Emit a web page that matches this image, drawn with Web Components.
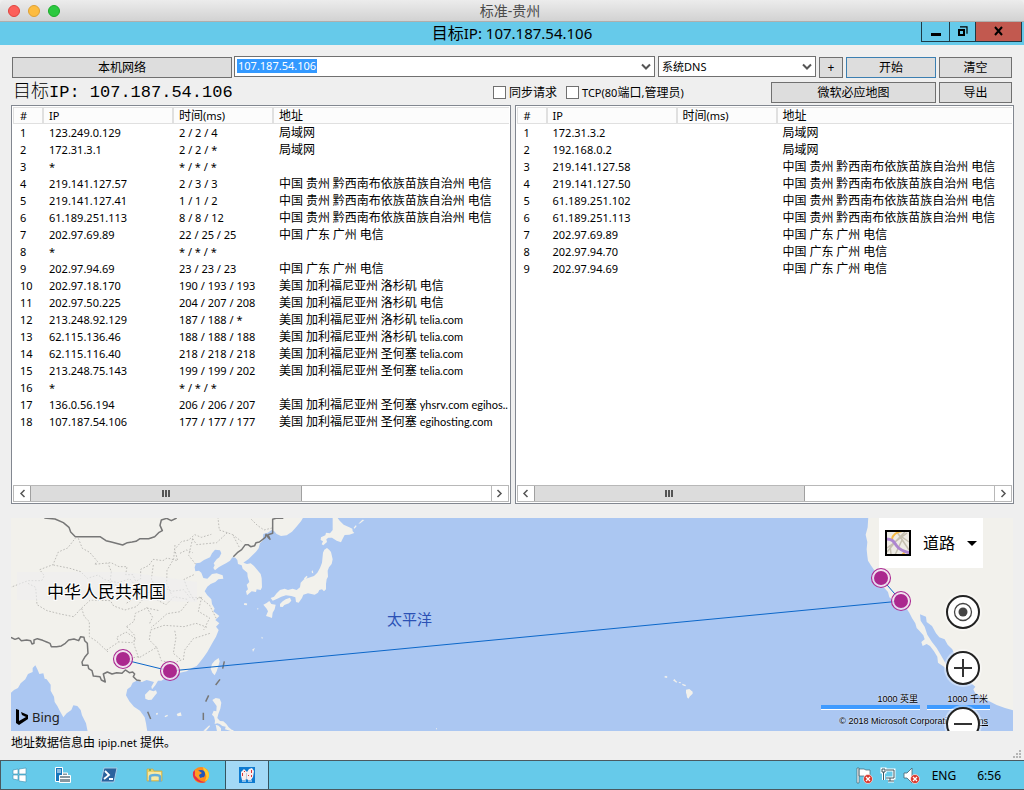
<!DOCTYPE html>
<html lang="zh-CN">
<head>
<meta charset="utf-8">
<title>标准-贵州</title>
<style>
  html, body { height: 100%; margin: 0; }
  body { background: #efefef; color: #000; font: 11px/17px "Noto Sans", "Noto Sans CJK SC", sans-serif; }
</style>
</head>
<body>
<remote-desktop></remote-desktop>
<script>
// Chinese runs are set one pixel larger than the Latin text round them.
const mix = (text) => text.replace(/[\u3000-\u9fff]+/g, '<span class="cj">$&</span>').replace(/[a-z]+\.com.*/, '<span class="host">$&</span>');
const BASE = `
  *, *::before { box-sizing: border-box; }
  .cj { font-size: var(--cj, 12px); }
  button, input, select { font: inherit; color: inherit; margin: 0; padding: 0; border: 0; border-radius: 0; }
`;
function define(name, render) {
  customElements.define(name, class extends HTMLElement {
    constructor() { super(); this.attachShadow({ mode: 'open' }); }
    connectedCallback() {
      const t = document.createElement('template');
      t.innerHTML = '<style>' + BASE + '</style>' + render(this);
      this.shadowRoot.replaceChildren(t.content.cloneNode(true));
    }
  });
}

define('mac-titlebar', () => `
<style>
  :host { display: grid; grid-template-columns: 1fr auto 1fr; align-items: center; height: 22px; flex: none; padding-right: 4px;
    background: linear-gradient(#ececec, #d2d2d2); border-bottom: 1px solid #b0aeac; border-radius: 5px 5px 0 0;
    font-size: 14px; line-height: 21px; color: #4a4a4a; }
  .lights { display: flex; gap: 8px; padding-left: 8px; }
  button { width: 12px; height: 12px; border-radius: 50%; background: var(--c); border: 1px solid var(--b); }
</style>
<div class="lights">
  <button aria-label="关闭" style="--c:#fc605b;--b:#e0443e"></button>
  <button aria-label="最小化" style="--c:#fdbc40;--b:#dea034"></button>
  <button aria-label="缩放" style="--c:#2bc940;--b:#1aab29"></button>
</div>
<span><slot></slot></span>`);

define('win-titlebar', () => `
<style>
  :host { display: grid; grid-template-columns: 1fr auto 1fr; height: 23px; flex: none; background: #66caea;
    font-size: 15px; line-height: 23px; --cj: 16px; }
  .ctl { display: flex; justify-content: flex-end; height: 20px; padding-right: 2px; }
  button { display: grid; place-items: center; background: #66caea; border: 1px solid #1d3a46; border-top: 0; margin-left: -1px; width: 29px; }
  .max { width: 27px; } .close { width: 47px; background: #c2594f; }
</style>
<span></span><span>${mix('目标IP: 107.187.54.106')}</span>
<div class="ctl">
  <button aria-label="最小化"><svg width="11" height="12"><path d="M1 7h10v3H1z"/></svg></button>
  <button class="max" aria-label="还原"><svg width="11" height="12" fill="none" stroke="#000"><path d="M2 4h5v5H2z" stroke-width="2"/><path d="M3 .8h7v7" stroke-width="1.200"/></svg></button>
  <button class="close" aria-label="关闭"><svg width="10" height="11" stroke="#000" stroke-width="2"><path d="M1 1l7 8M8 1L1 9"/></svg></button>
</div>`);

define('push-button', () => `
<style>
  :host { display: block; height: 21px; flex: none; font-size: 12px; }
  button { display: block; width: 100%; height: 100%; background: #ddd; border: 1px solid #707070; line-height: 19px; }
  :host([default]) button { border-color: #3c7fb1; }
</style>
<button><slot></slot></button>`);

const CHEVRON = '<svg width="10" height="8" fill="none" stroke="#555" stroke-width="2"><path d="M1 1.500l4 4 4-4"/></svg>';

define('combo-box', () => `
<style>
  :host { display: flex; height: 21px; background: #fff; border: 1px solid #707070; align-items: center; justify-content: space-between; padding-left: 2px; }
  input { width: 80px; height: 14px; margin-bottom: 1px; padding-left: 1px; background: #39f; color: #fff; line-height: 14px; outline: none; }
  button { background: none; width: 16px; height: 17px; display: grid; place-items: center; }
</style>
<input aria-label="目标地址" value="107.187.54.106"><button aria-label="历史">${CHEVRON}</button>`);

define('dns-select', () => `
<style>
  :host { display: grid; height: 21px; background: #fff; border: 1px solid #707070; }
  select, svg { grid-area: 1 / 1; }
  select { appearance: none; background: none; width: 100%; padding-left: 3px; height: 19px; line-height: 19px; }
  svg { justify-self: end; align-self: center; margin-right: 3px; pointer-events: none; }
</style>
<select aria-label="DNS"><option>系统DNS</option></select>${CHEVRON}`);

define('check-box', (el) => `
<style>
  :host { display: block; }
  label { display: flex; align-items: center; gap: 3px; }
  input { appearance: none; width: 13px; height: 13px; background: #fff; border: 1px solid #707070; }
</style>
<label><input type="checkbox"><span>${mix(el.getAttribute('label'))}</span></label>`);

define('trace-toolbar', () => `
<style>
  :host { display: grid; gap: 4px; padding: 0 2px 0 1px; }
  .row { display: flex; gap: 3px; }
  .one { height: 22px; align-items: flex-end; }
  .one combo-box, .one dns-select { align-self: flex-start; }
  .two { height: 22px; }
  .local { width: 220px; margin-right: -1px; }
  combo-box { flex: 1; } dns-select { width: 158px; }
  .plus { width: 24px; } .start { width: 90px; } .end { width: 73px; } .map { width: 165px; }
  h1 { margin: 0; padding-left: 1px; flex: 1; font: 17px/20px "Liberation Mono", "Noto Sans CJK SC", monospace; --cj: 18px; white-space: pre; }
  .cj { font-weight: 300; }
  .checks { display: flex; gap: 9px; width: 275px; align-items: center; height: 20px; }
</style>
<div class="row one">
  <push-button class="local">本机网络</push-button><combo-box></combo-box><dns-select></dns-select>
  <push-button class="plus">+</push-button><push-button class="start" default>开始</push-button><push-button class="end">清空</push-button>
</div>
<div class="row two">
  <h1>${mix('目标IP: 107.187.54.106')}</h1>
  <div class="checks"><check-box label="同步请求"></check-box><check-box label="TCP(80端口,管理员)"></check-box></div>
  <push-button class="map">微软必应地图</push-button><push-button class="end">导出</push-button>
</div>`);

const QXN = '中国 贵州 黔西南布依族苗族自治州 电信', GZ = '中国 广东 广州 电信';
const LA = '美国 加利福尼亚州 洛杉矶 ', SJ = '美国 加利福尼亚州 圣何塞 ', NONE = ['*', '* / * / *', ''];
const ROUTES = {
  out: [
    ['123.249.0.129', '2 / 2 / 4', '局域网'], ['172.31.3.1', '2 / 2 / *', '局域网'], NONE,
    ['219.141.127.57', '2 / 3 / 3', QXN], ['219.141.127.41', '1 / 1 / 2', QXN], ['61.189.251.113', '8 / 8 / 12', QXN],
    ['202.97.69.89', '22 / 25 / 25', GZ], NONE, ['202.97.94.69', '23 / 23 / 23', GZ],
    ['202.97.18.170', '190 / 193 / 193', LA + '电信'], ['202.97.50.225', '204 / 207 / 208', LA + '电信'],
    ['213.248.92.129', '187 / 188 / *', LA + 'telia.com'], ['62.115.136.46', '188 / 188 / 188', LA + 'telia.com'],
    ['62.115.116.40', '218 / 218 / 218', SJ + 'telia.com'], ['213.248.75.143', '199 / 199 / 202', SJ + 'telia.com'], NONE,
    ['136.0.56.194', '206 / 206 / 207', SJ + 'yhsrv.com egihos..'], ['107.187.54.106', '177 / 177 / 177', SJ + 'egihosting.com']
  ],
  back: [
    ['172.31.3.2', '', '局域网'], ['192.168.0.2', '', '局域网'],
    ['219.141.127.58', '', QXN], ['219.141.127.50', '', QXN], ['61.189.251.102', '', QXN], ['61.189.251.113', '', QXN],
    ['202.97.69.89', '', GZ], ['202.97.94.70', '', GZ], ['202.97.94.69', '', GZ]
  ]
};

define('route-list', (el) => `
<style>
  :host { display: flex; flex-direction: column; background: #fff; border: 1px solid #828790; padding: 1px; min-width: 0; }
  .body { flex: 1; overflow: hidden; }
  table { width: 100%; table-layout: fixed; border-collapse: separate; border-spacing: 0; }
  th, td { height: 17px; padding: 0 0 0 5px; text-align: left; font-weight: 400; white-space: nowrap; overflow: hidden; line-height: 17px; }
  .host { font-family: Lato, sans-serif; line-height: 1; }
  th { line-height: 15px; background: #fcfcfc; border: solid #e0e0e0; border-width: 1px 2px 1px 0; }
  th:first-child { border-left-width: 1px; }
  th:last-child { border-right: 0; }
  td:first-child { padding-left: 7px; } th:first-child { padding-left: 6px; }
  .n { width: 31px; } .ip { width: 130px; } .ms { width: 100px; }
  .bar { display: flex; height: 17px; background: #fff; border: 1px solid #b8b8b8; }
  .bar button { width: 16px; background: #fff; display: grid; place-items: center; }
  .thumb { width: 59%; flex: none; background: #dcdcdc; border: solid #a0a0a0; border-width: 0 1px; display: grid; place-items: center; }
  .track { flex: 1; display: flex; border-right: 1px solid #b8b8b8; }
  .grip { width: 8px; height: 7px; background: repeating-linear-gradient(90deg, #555 0 2px, transparent 2px 3px); }
</style>
<div class="body"><table>
  <colgroup><col class="n"><col class="ip"><col class="ms"><col></colgroup>
  <thead><tr><th>#</th><th>IP</th><th>${mix('时间(ms)')}</th><th>${mix('地址')}</th></tr></thead>
  <tbody>${ROUTES[el.getAttribute('route')].map((r, i) => `<tr><td>${i + 1}</td>${r.map(c => `<td>${mix(c)}</td>`).join('')}</tr>`).join('')}</tbody>
</table></div>
<div class="bar">
  <button aria-label="向左"><svg width="7" height="9" fill="none" stroke="#555" stroke-width="1.500"><path d="M5.500 1L2 4.500 5.500 8"/></svg></button>
  <div class="track"><div class="thumb"><span class="grip"></span></div></div>
  <button aria-label="向右"><svg width="7" height="9" fill="none" stroke="#555" stroke-width="1.500"><path d="M1.500 1L5 4.500 1.500 8"/></svg></button>
</div>`);

const pin = (x, y) => `<g transform="translate(${x} ${y})"><circle r="9.500" fill="#f0e0f0" fill-opacity=".8" stroke="#ab2a92" stroke-width="1.100"/><circle r="7" fill="#ab288e"/></g>`;

define('route-map', () => `
<style>
  :host { display: block; position: relative; height: 213px; flex: none; overflow: hidden; background: #abc7f2; }
  .world { display: block; width: 100%; height: 213px; }
  .world text { font-family: "Noto Sans CJK SC", sans-serif; paint-order: stroke; }
  .type { position: absolute; right: 30px; top: 0; width: 104px; height: 50px; background: #fffffffa; display: flex; align-items: center; padding-left: 6px; font-size: 16px; }
  .type span { margin: 0 12px; }
  .round { position: absolute; right: 33px; width: 34px; height: 34px; border-radius: 50%; background: #fff; border: 2px solid #222; display: grid; place-items: center; box-shadow: 0 0 0 2px #ffffff66; }
  .round svg { display: block; }
  .scale { position: absolute; right: 23px; bottom: 4px; display: grid; justify-items: end; font: 9px/12px "Liberation Sans", "Noto Sans CJK SC", sans-serif; text-shadow: 0 0 2px #fff; }
  .bars { display: flex; gap: 7px; }
  .bars span { border-bottom: 4px solid #3f9bff; text-align: right; padding-right: 2px; box-shadow: 0 1px #fff; }
  .mi { width: 99px; } .km { width: 63px; }
  .copy { margin-top: 7px; padding-right: 2px; white-space: nowrap; line-height: 11px; }
  .copy a { color: inherit; margin-left: 4px; }
  .bing { position: absolute; left: 5px; bottom: 5px; display: flex; align-items: center; gap: 4px; font-size: 13px; line-height: 17px; color: #222; }
</style>
<svg class="world" viewBox="11 518 1002 213" preserveAspectRatio="xMaxYMid slice" role="img" aria-label="路由地图">
  <rect x="11" y="518" width="1002" height="213" fill="#abc7f2"/>
  <g fill="#f2f1ec" transform="translate(0 510) scale(.33333)">
    <path d="M30 20H911L903 34 888 52 876 65 860 76 843 78 830 72 822 63 815 60 803 68 790 72 788 92 780 100 776 115 768 125 755 138 745 148 730 158 741 162 752 160 762 168 772 180 782 192 785 205 786 232 782 240 770 238 768 246 755 244 741 256 738 244 744 238 740 224 748 216 743 200 742 188 728 176 725 166 714 162 712 150 706 143 697 142 690 152 678 160 668 165 656 172 645 181 640 174 644 166 641 160 650 148 658 142 664 130 660 121 645 119 636 130 630 142 612 150 600 158 588 160 584 172 586 184 597 182 604 188 610 204 622 206 636 192 650 190 668 196 670 206 655 208 646 216 632 222 622 230 614 244 622 256 634 268 636 282 644 296 640 304 658 318 652 324 646 330 658 340 648 350 656 360 648 380 640 394 632 408 622 426 612 440 600 456 590 468 576 474 560 484 540 488 524 496 512 506 496 505 484 512 474 512 466 526 456 538 454 530 462 516 440 510 426 516 410 512 398 518 392 530 382 538 378 556 388 574 402 590 420 602 434 622 438 640 442 665H263L258 640 246 616 242 600 232 588 220 586 214 600 200 610 190 622 180 604 172 588 164 576 162 560 152 542 152 524 140 508 134 506 130 490 118 492 112 478 106 466 98 474 98 486 84 492 76 508 62 520 54 534 42 540 33 548 20 548z"/>
    <path d="M435 554l8-8 6-6 11 4 8-3 3 8-8 10-8 10-10 1-9-4zM656 444l3 10-4 14-5 16-6 12-7-8-5-12 4-14 8-10zM637 570l10-6 12 2 5 12-3 18-6 16-3 12 8 9 10 1 9 8 7 10 9 7 6 2-2 4-14-4-10-3 2-8-10-2-8-6-7-2-8 2 1-10-3-12-6-6 5-12 8 2 1-16zM647 644l9 3 7 8v9h-12zM610 662l18-16 2 3-12 14z"/>
    <path d="M494 618l8-4 2 4-9 4zM530 612l12-5 3 10-12 2zM468 610l5-2 1 5-5 2zM732 282l7-3 1 5-7 1z"/>
    <g transform="translate(720 0)">
      <path d="M278 20H290L299 32 311 44 328 52 337 56 338 64 343 69 328 74 314 75 308 86 303 97 290 92 276 83 265 83 259 88 261 96 250 106 245 103 249 94 242 90 243 82 256 76 258 68 270 70 278 60zM341 53l6-7 3 2-6 8zM355 41l12-12 6 1-12 10z"/>
      <path d="M249 128L253 119 261 114 268 120 273 126 278 148 275 162 267 172 263 182 264 200 260 208 258 222 258 238 252 244 246 238 238 240 234 248 224 254 204 250 190 254 186 264 176 278 168 276 166 262 154 258 138 256 124 260 112 266 98 272 92 264 102 260 110 250 120 240 134 236 144 240 158 236 170 240 180 232 182 218 192 208 204 204 222 198 232 188 240 174 246 158zM192 205l8-8 3 4-9 8zM215 184l3-3 2 9-4-1z"/>
      <path d="M120 282L128 274 137 268 150 263 154 272 147 280 133 285 128 291 120 290zM70 284L80 279 88 273 94 282 107 284 104 298 98 308 96 324 88 321 78 318 84 304 80 296zM12 280l10 1-2 5-7-1zM51 294l5 2-3 3zM64 380l5 3-3 4zM37 418l8-4-6 12z"/>
    </g>
    <g transform="translate(2340 0)">
      <path d="M265 20H705V602L699 601 675 594 650 585 625 572 605 562 585 548 580 538 586 530 572 518 556 494 540 464 524 436 517 418 503 404 494 388 478 382 468 370 456 348 440 336 438 320 420 313 422 332 434 350 442 374 456 396 470 414 482 434 498 462 512 486 520 500 508 488 494 472 474 458 472 440 462 424 450 408 440 402 428 408 424 396 434 388 430 376 418 362 410 354 406 340 396 324 388 308 380 296 362 282 344 274 328 262 324 246 310 230 298 212 282 196 284 182 274 168 264 152 262 138 260 118 262 96 257 74 263 52z"/>
    </g>
    <path d="M1992 501l6-4 5 4-4 3zM2019 511l5-4 4 6 4 2-3 3zM2036 516l7 1-1 3-5-1zM2046 521l12 4-2 4-8-3zM2058 539l10-2 10 8v6l-8 8-5 7-4-4-1-8-2-6zM1308 655l3-1v6z"/>
    <g fill="none" stroke="#777" stroke-width="4.500" stroke-linejoin="round">
      <path d="M133 24L165 27 190 38 207 52 212 66 226 80 300 80 318 92 334 96 368 105 382 98 396 96 408 94 420 86 446 86 464 80 476 68 487 62 480 46 484 30 500 25 514 32 530 24"/>
      <path d="M700 140L712 128 725 119 736 104 744 104 752 110 764 107 768 98 778 96 796 82 798 73 806 84 810 88 804 74 818 70 818 28 830 24 850 25"/>
      <path d="M33 382L45 388 56 384 64 392 80 390 92 392 96 402 102 400 102 390 112 386 128 391 140 396 150 400 154 410 170 410 184 408 196 400 206 390 222 387 236 392 242 380 252 382 254 392 262 400 264 430 254 442 246 456 248 466 264 466 266 476 276 482 280 498 300 500 304 510 316 516 310 492 322 486 336 492 350 488 366 490 376 480 388 488 398 486 404 492 400 500 410 510 422 512"/>
      <path d="M673 454l-5 22M660 508l-13 17M626 556l-9 19M610 608v22M443 605l9 22"/>
    </g>
    <g fill="none" stroke="#bdbcb8" stroke-width="3" stroke-dasharray="5 5">
      <path d="M228 82l-25 32-28 12-16 38-40 15 14 18-8 15-41 0-52 20M84 220l23 12 4 52 30 18 40 10 40 8 20-22 30-28 60 2 10 16 34 12 34-10 20-22 20-24 46-10 20 10 36-5 20 25 28-2 30 24 20 40"/>
      <path d="M235 85l12 30 22 12 24 28-10 8 50-5 24 12 24 0-4 24 22 0 8 20 15-8 0-28 25-12 12-18 30 4 12-8 32 8-9-34 20-23 22-5 18-16 20 8 30-9M160 165l50 10 32 10 20 20 32-10 20 14 40 9 35-12 20 24 0 30-30 20M245 295l8 25 15 15 0 45 22 14 34 32M300 270l50-16 10-25-30-10 4-34-10-25M460 165l-6 42 14 27 0 34 30 16 24-24 40 8M525 105l-4 42-20 34-1 40 16 36M578 86l-12 50 22 28M320 420l36-24-6-14 28-16 30 20-12 12-38-2M380 350l22-16 4-24 34-16 38 8M380 350l24 26-2 28 14 40 30-18 24-14-22-22 4-30 40-14 60 4 36-10 34 12M415 440l-30 6M470 412l14 40 34 8 26-10-24-20 8-48-4-22M550 450l4-30 26-34 50-16M565 275l-24 30-40 6-24 22-24 20M440 292l18 30-10 20M605 262l-10 42 34 20-18 36"/>
      <path d="M578 86l12 18 60-6 32-30 16 6 20 38M682 68l-24-8-4-36M698 74l26 20M754 28l18 18 20 14 24-6M540 130l20-10 18 8M604 262l-22 8-20-34-10-28 30-14"/>
    </g>
  </g>
  <path d="M17 572h110l70 10v20l-70-2H17z" fill="#efeff0" opacity=".6"/>
  <path d="M123 659.500l47 11.500 731-70-20-23" fill="none" stroke="#0c67c9" stroke-width="1"/>
  ${pin(123, 659)}${pin(170, 671)}${pin(881, 578)}${pin(901, 601)}
  <text x="47" y="598" font-size="17" stroke="#fff" stroke-width="2">中华人民共和国</text>
  <text x="387" y="625" font-size="15" fill="#2b51b5">太平洋</text>
</svg>
<div class="scale">
  <div class="bars"><span class="mi">1000 英里</span><span class="km">1000 千米</span></div>
  <div class="copy">© 2018 Microsoft Corporation <a href="#terms">Terms</a></div>
</div>
<button class="type">
  <svg width="26" height="26"><path fill="#eeebe5" d="M0 0h26v26H0z"/><g fill="none"><path d="M2 18l20-15M12 2l12 18M2 22l9-11 9-9M6 24l-1-9M17 7l7 5M10 25l7-15" stroke="#c5bfb0" stroke-width="1.500"/><path d="M7 9c1-5 5-7 10-8M17 25l4-4" stroke="#f5b944" stroke-width="2"/><path d="M1 9c7 0 8 3 10 6s5 6 14 8" stroke="#ad86d0" stroke-width="3"/></g><path fill="none" stroke="#000" stroke-width="2" d="M1 1h24v24H1z"/></svg>
  <span>道路</span><svg width="10" height="5"><path d="M0 0h10L5 5z"/></svg>
</button>
<button class="round" style="top:77px" aria-label="定位"><svg width="20" height="20"><circle cx="10" cy="10" r="8.500" fill="none" stroke="#444" stroke-width="1.300"/><circle cx="10" cy="10" r="4.500" fill="#444"/></svg></button>
<button class="round" style="top:133px" aria-label="放大"><svg width="18" height="18" stroke="#333" stroke-width="2"><path d="M9 0v18M0 9h18"/></svg></button>
<button class="round" style="top:189px" aria-label="缩小"><svg width="18" height="18" stroke="#333" stroke-width="2"><path d="M0 9h18"/></svg></button>
<div class="bing"><svg width="12" height="17"><path d="M0 0l3 1v11l7-4-4-2-1-3 7 3v4l-9 6-3-2z"/></svg><span>Bing</span></div>`);

const ERR = '<circle cx="12" cy="12" r="4.500" fill="#d9362b" stroke="#fff" stroke-width=".6"/><path d="M10 10l4 4M14 10l-4 4" stroke="#fff" stroke-width="1.300"/>';

define('task-bar', () => `
<style>
  :host { display: flex; height: 30px; flex: none; justify-content: space-between; background: #66caea; border: solid #4a5960; border-width: 1px 0 1px 1px; }
  nav, .tray { display: flex; align-items: center; }
  nav { gap: 2px; }
  nav button { width: 44px; height: 28px; background: none; display: grid; place-items: center; }
  nav button:first-child { width: 38px; }
  nav .on { background: #a3d9f6; border: solid #36535f; border-width: 0 1px; }
  .tray { gap: 7px; padding-right: 23px; font-size: 12px; }
  .lang { margin-left: 5px; } .time { margin-left: 14px; }
  svg { display: block; }
</style>
<nav>
  <button aria-label="开始"><svg width="16" height="16" fill="#fff" stroke="#3e8fae" stroke-width=".6"><path d="M1 3l5-1v5H1zM7 2l7-1v6H7zM1 8h5v5l-5-1zM7 8h7v7l-7-1z"/></svg></button>
  <button aria-label="服务器管理器"><svg width="18" height="18"><path fill="#1676bd" stroke="#fff" d="M1.500 1.500h7v14h-7z"/><path stroke="#fff" d="M3 4h4M3 6h4"/><path fill="#8797a0" stroke="#fff" d="M5.500 9.500h11v7h-11zM8.500 9V7h5v2"/><path stroke="#fff" d="M6 12.500h10"/></svg></button>
  <button aria-label="PowerShell"><svg width="18" height="16"><path fill="#2a639d" stroke="#a9cbe6" d="M4 1h13l-3 14H1z"/><path fill="none" stroke="#fff" stroke-width="1.800" d="M5 4l4 4-5 4M9 12h4"/></svg></button>
  <button aria-label="资源管理器"><svg width="18" height="18"><path fill="#e8cf6a" stroke="#c9a947" stroke-width=".7" d="M1 3h6l1 2h8v10H1z"/><path fill="#f7e9a4" d="M2 6h13v8H2z"/><path fill="none" stroke="#62aedb" stroke-width="2.500" d="M4 16v-5q0-2 5-2t5 2v5"/><path stroke="#3ca03f" d="M3 4h2"/></svg></button>
  <button aria-label="Firefox"><svg width="18" height="18"><circle cx="9" cy="9" r="8" fill="#ff8a1c"/><path fill="#ffcb2d" d="M11 1q6 3 6 8t-4 6q3-6-1-9z"/><path fill="#e32d4c" d="M1 6q-1 6 4 9t9 1q-5 0-8-3T3 4z"/><circle cx="9" cy="8" r="4" fill="#2356b8"/><path fill="#ff9b22" d="M3 4l4 1 3 2-3 2 1 3 4-1q-2 3-6 1T3 8z"/></svg></button>
  <button class="on" aria-label="路由追踪"><svg width="16" height="16"><path fill="#0d7ad0" d="M0 0h16v16H0z"/><path fill="#fbeeee" d="M2 5l3-3 2 2 1 1 2-3 3-1 2 3-1 6-2 3H9l-1-1-2 1H3l-1-4z"/><path fill="#d83a3a" d="M3 6h1v3H3zM12 3h1v3h-1zM9 8h1v1H9zM12 8h1v2h-1zM5 4h1v1H5z"/><path fill="#bcd" d="M7 6h1v6H7z"/><path stroke="#fff" d="M3 14h4M9 14h4"/></svg></button>
</nav>
<div class="tray">
  <svg width="17" height="17"><path fill="#fff" stroke="#46636e" stroke-width=".7" d="M1 1h2v15H1zM3 2h5l2 1h4v7H9L8 9H3z"/>${ERR}</svg>
  <svg width="16" height="16" fill="none" stroke="#fff" stroke-width="3"><path d="M6 3h8v8H6M8 14h6M10 11v3M2 2h3v3H2zM3.500 5v8"/><path stroke="#3b5965" stroke-width="1" d="M6 3h8v8H6M8 14h6M10 11v3M2 2h3v3H2zM3.500 5v8"/></svg>
  <svg width="17" height="17"><path fill="#fff" stroke="#46636e" stroke-width=".8" d="M1 6h3l5-5v15l-5-5H1z"/>${ERR}</svg>
  <span class="lang">ENG</span><span class="time">6:56</span>
</div>`);

define('remote-desktop', () => `
<style>
  :host { display: flex; flex-direction: column; min-height: 100vh; }
  main { flex: 1; display: flex; flex-direction: column; padding: 11px 10px 0 11px; }
  .lists { flex: 1; display: grid; grid-template-columns: 1fr 1fr; gap: 4px; margin: 1px 0 14px; }
  route-map { margin-right: 1px; }
  footer { height: 29px; display: flex; justify-content: space-between; align-items: flex-end; margin-right: -8px; }
  footer p { margin: 0; height: 26px; line-height: 18px; }
  footer svg { margin-bottom: 1px; }
</style>
<mac-titlebar>标准-贵州</mac-titlebar>
<win-titlebar></win-titlebar>
<main>
  <trace-toolbar></trace-toolbar>
  <div class="lists"><route-list route="out"></route-list><route-list route="back"></route-list></div>
  <route-map></route-map>
  <footer><p>${mix('地址数据信息由 ipip.net 提供。')}</p>
    <svg width="9" height="9" fill="#b5b5b5"><path d="M6 0h2v2H6zM3 3h2v2H3zM6 3h2v2H6zM0 6h2v2H0zM3 6h2v2H3zM6 6h2v2H6z"/></svg></footer>
</main>
<task-bar></task-bar>`);
</script>
</body>
</html>
